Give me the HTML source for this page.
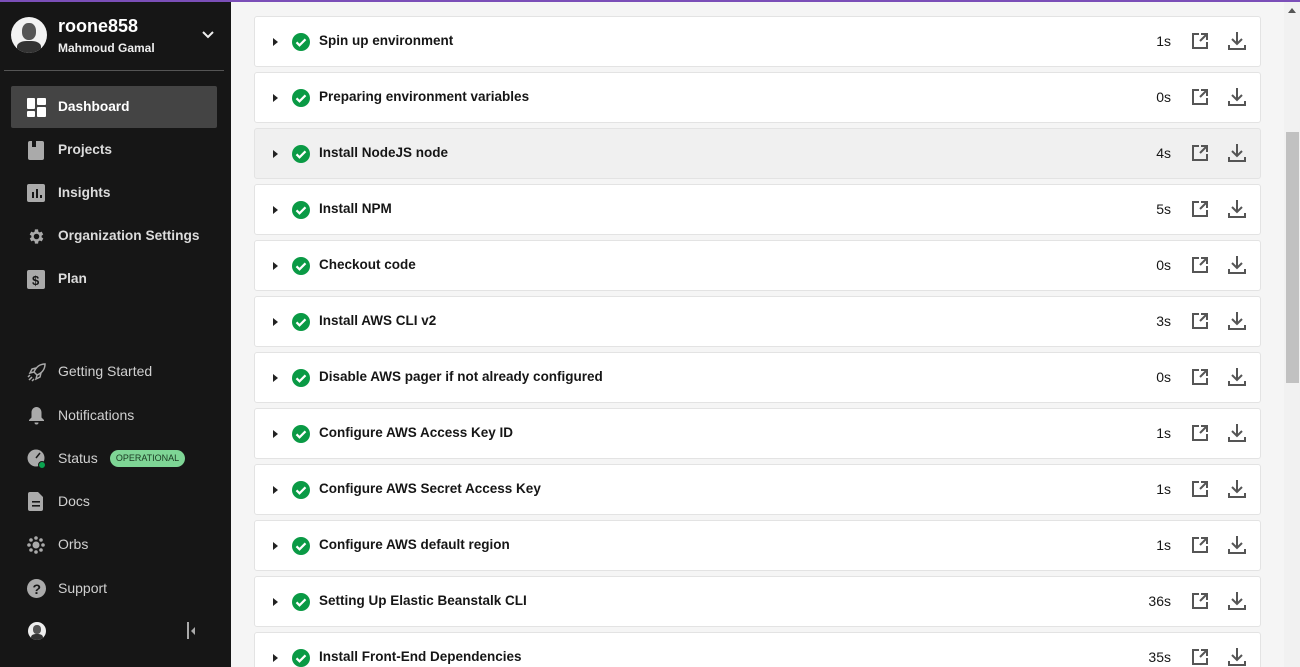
<!DOCTYPE html>
<html><head><meta charset="utf-8"><style>
*{box-sizing:border-box;margin:0;padding:0}
html{overflow:hidden;width:1300px;height:667px}
body{width:1300px;height:667px;overflow:hidden;background:#f5f5f5;font-family:"Liberation Sans",Roboto,sans-serif;position:relative}
.top{position:absolute;left:0;top:0;width:1300px;height:2px;background:#7b4fb8;z-index:5}
.sb{position:absolute;left:0;top:0;width:231px;height:667px;background:#161616;color:#e8e8e8}
.av{position:absolute;border-radius:50%;background:#ddd;overflow:hidden}
.nav{position:absolute;left:58px;font-size:13.7px;font-weight:bold;color:#dcdcdc}
.nav2{position:absolute;left:58px;font-size:14px;color:#d0d0d0}
.ic{position:absolute;left:27px}
.card{position:absolute;left:254px;width:1007px;height:51px;background:#fff;border:1px solid #e3e3e3;border-radius:3px}
.card.h{background:#f0f0f0}
.card .car{position:absolute;left:18px;top:21px;width:0;height:0;border-left:5px solid #222;border-top:4px solid transparent;border-bottom:4px solid transparent}
.card .ck{position:absolute;left:37px;top:16px}
.card .t{position:absolute;left:64px;top:16px;font-size:13.5px;font-weight:bold;color:#161616}
.card .d{position:absolute;right:89px;top:16px;font-size:14px;color:#161616}
.card .e{position:absolute;left:936px;top:15px}
.card .dl{position:absolute;left:972px;top:14px}
.scr{position:absolute;left:1284px;top:0;width:16px;height:667px;background:#f1f1f1}
.thumb{position:absolute;left:1286px;top:132px;width:13px;height:251px;background:#c1c1c1}
</style></head><body>
<div class="top"></div>
<div class="sb">
 <div class="av" style="left:11px;top:17px;width:36px;height:36px;background:#f2f2f2"><div style="position:absolute;left:11px;top:6px;width:14px;height:17px;border-radius:45%;background:#555"></div><div style="position:absolute;left:6px;top:24px;width:24px;height:14px;border-radius:40%;background:#333"></div></div>
 <div style="position:absolute;left:58px;top:16px;font-size:18px;font-weight:bold;color:#fff">roone858</div>
 <div style="position:absolute;left:58px;top:41px;font-size:12px;font-weight:bold;color:#eee">Mahmoud Gamal</div>
 <svg style="position:absolute;left:202px;top:31px" width="12" height="8"><path d="M1 1l5 5 5-5" stroke="#eee" stroke-width="2" fill="none"/></svg>
 <div style="position:absolute;left:4px;top:70px;width:220px;height:1px;background:#555"></div>
 <div style="position:absolute;left:11px;top:86px;width:206px;height:42px;background:#444;border-radius:2px"></div>
 <svg class="ic" style="top:98px" width="19" height="19"><rect x="0" y="0" width="8" height="11" rx="1" fill="#fff"/><rect x="10" y="0" width="9" height="7" rx="1" fill="#fff"/><rect x="0" y="13" width="8" height="6" rx="1" fill="#fff"/><rect x="10" y="9" width="9" height="10" rx="1" fill="#fff"/></svg>
 <div class="nav" style="top:99px;color:#fff">Dashboard</div>
 <svg class="ic" style="top:141px" width="18" height="19"><rect x="1" y="0" width="16" height="19" rx="2" fill="#aaa"/><rect x="5" y="0" width="4" height="6" fill="#161616"/></svg>
 <div class="nav" style="top:142px">Projects</div>
 <svg class="ic" style="top:184px" width="18" height="18"><rect width="18" height="18" rx="2" fill="#aaa"/><rect x="5" y="8" width="2" height="6" fill="#161616"/><rect x="9" y="5" width="2" height="9" fill="#161616"/><rect x="13" y="11" width="2" height="3" fill="#161616"/></svg>
 <div class="nav" style="top:185px">Insights</div>
 <svg class="ic" style="top:227px" width="19" height="19" viewBox="0 0 24 24"><path fill="#aaa" d="M19.4 13a7.5 7.5 0 000-2l2.1-1.6-2-3.5-2.5 1a7 7 0 00-1.7-1L15 3h-4l-.4 2.9a7 7 0 00-1.7 1l-2.5-1-2 3.5L6.6 11a7.5 7.5 0 000 2l-2.1 1.6 2 3.5 2.5-1a7 7 0 001.7 1L11 21h4l.4-2.9a7 7 0 001.7-1l2.5 1 2-3.5zM13 15.5a3.5 3.5 0 110-7 3.5 3.5 0 010 7z" transform="translate(-1 0)"/></svg>
 <div class="nav" style="top:228px">Organization Settings</div>
 <svg class="ic" style="top:270px" width="18" height="19"><rect width="18" height="19" rx="2" fill="#aaa"/><text x="5" y="15" font-size="13" font-family="Liberation Sans" fill="#161616" font-weight="bold">$</text></svg>
 <div class="nav" style="top:271px">Plan</div>
 <svg class="ic" style="top:362px" width="20" height="20" viewBox="0 0 20 20"><path d="M18 2c-5 0-9 3-11 8l3 3c5-2 8-6 8-11zM7 10l-4 1 2-4 4-1M10 13l-1 4 4-2 1-4M5 15l-3 3M7 17l-2 2M3 13l-2 2" stroke="#aaa" stroke-width="1.5" fill="none"/></svg>
 <div class="nav2" style="top:363px">Getting Started</div>
 <svg class="ic" style="top:406px" width="19" height="19"><path d="M9.5 1c-3 0-5 2.5-5 5.5v5L2 14v1h15v-1l-2.5-2.5v-5C14.5 3.5 12.5 1 9.5 1zM7.5 16.5a2 2 0 004 0z" fill="#aaa"/></svg>
 <div class="nav2" style="top:407px">Notifications</div>
 <svg class="ic" style="top:449px" width="20" height="20"><circle cx="9" cy="9" r="8.5" fill="#aaa"/><path d="M9 9l4-5" stroke="#161616" stroke-width="1.5"/><circle cx="15" cy="16" r="3.5" fill="#0aa34f" stroke="#161616" stroke-width="1"/></svg>
 <div class="nav2" style="top:450px">Status</div>
 <div style="position:absolute;left:110px;top:450px;width:75px;height:17px;border-radius:9px;background:#7ed595;color:#1a3a22;font-size:9px;line-height:17px;text-align:center">OPERATIONAL</div>
 <svg class="ic" style="top:492px" width="18" height="19"><path d="M3 0h8l5 5v12a2 2 0 01-2 2H3a2 2 0 01-2-2V2a2 2 0 012-2z" fill="#aaa"/><rect x="5" y="9" width="8" height="1.6" fill="#161616"/><rect x="5" y="13" width="8" height="1.6" fill="#161616"/></svg>
 <div class="nav2" style="top:493px">Docs</div>
 <svg class="ic" style="top:536px" width="18" height="18" fill="#aaa"><circle cx="9" cy="9" r="3.5"/><circle cx="9" cy="2" r="1.8"/><circle cx="9" cy="16" r="1.8"/><circle cx="2" cy="9" r="1.8"/><circle cx="16" cy="9" r="1.8"/><circle cx="4" cy="4" r="1.8"/><circle cx="14" cy="4" r="1.8"/><circle cx="4" cy="14" r="1.8"/><circle cx="14" cy="14" r="1.8"/></svg>
 <div class="nav2" style="top:536px">Orbs</div>
 <svg class="ic" style="top:579px" width="19" height="19"><circle cx="9.5" cy="9.5" r="9.5" fill="#aaa"/><text x="5.5" y="15" font-size="14" font-weight="bold" font-family="Liberation Sans" fill="#161616">?</text></svg>
 <div class="nav2" style="top:580px">Support</div>
 <div class="av" style="left:28px;top:622px;width:18px;height:18px;background:#eee"><div style="position:absolute;left:5px;top:3px;width:8px;height:9px;border-radius:45%;background:#555"></div><div style="position:absolute;left:3px;top:12px;width:12px;height:8px;background:#333;border-radius:40%"></div></div>
 <div style="position:absolute;left:187px;top:622px;width:2px;height:17px;background:#aaa"></div>
 <div style="position:absolute;left:191px;top:627px;border-right:4px solid #aaa;border-top:4px solid transparent;border-bottom:4px solid transparent"></div>
</div>
<div id="m" style="position:absolute;left:0;top:0;width:1300px;height:667px;overflow:hidden"></div>
<div class="scr"></div>
<svg style="position:absolute;left:1288px;top:8px" width="8" height="5"><path d="M0 5L4 0 8 5z" fill="#555"/></svg>
<div class="thumb"></div>
<script>
var rows=[["Spin up environment","1s"],["Preparing environment variables","0s"],["Install NodeJS node","4s"],["Install NPM","5s"],["Checkout code","0s"],["Install AWS CLI v2","3s"],["Disable AWS pager if not already configured","0s"],["Configure AWS Access Key ID","1s"],["Configure AWS Secret Access Key","1s"],["Configure AWS default region","1s"],["Setting Up Elastic Beanstalk CLI","36s"],["Install Front-End Dependencies","35s"]];
var h="";
rows.forEach(function(r,i){h+='<div class="card'+(i==2?' h':'')+'" style="top:'+(16+56*i)+'px"><div class="car"></div><svg class="ck" width="18" height="18"><circle cx="9" cy="9" r="9" fill="#0a9a45"/><path d="M4.5 9.3l3 3 6-6" stroke="#fff" stroke-width="2.2" fill="none"/></svg><div class="t">'+r[0]+'</div><div class="d">'+r[1]+'</div><svg class="e" width="18" height="18"><path d="M8 2H2v14h14v-6" stroke="#555" stroke-width="2" fill="none"/><path d="M10 2h6v6M16 2l-7 7" stroke="#555" stroke-width="2" fill="none"/></svg><svg class="dl" width="20" height="20"><path d="M10 1v12M5 8l5 5 5-5" stroke="#555" stroke-width="2" fill="none"/><path d="M2 14v4h16v-4" stroke="#555" stroke-width="2" fill="none"/></svg></div>';});
document.getElementById("m").innerHTML=h;
</script>
</body></html>
